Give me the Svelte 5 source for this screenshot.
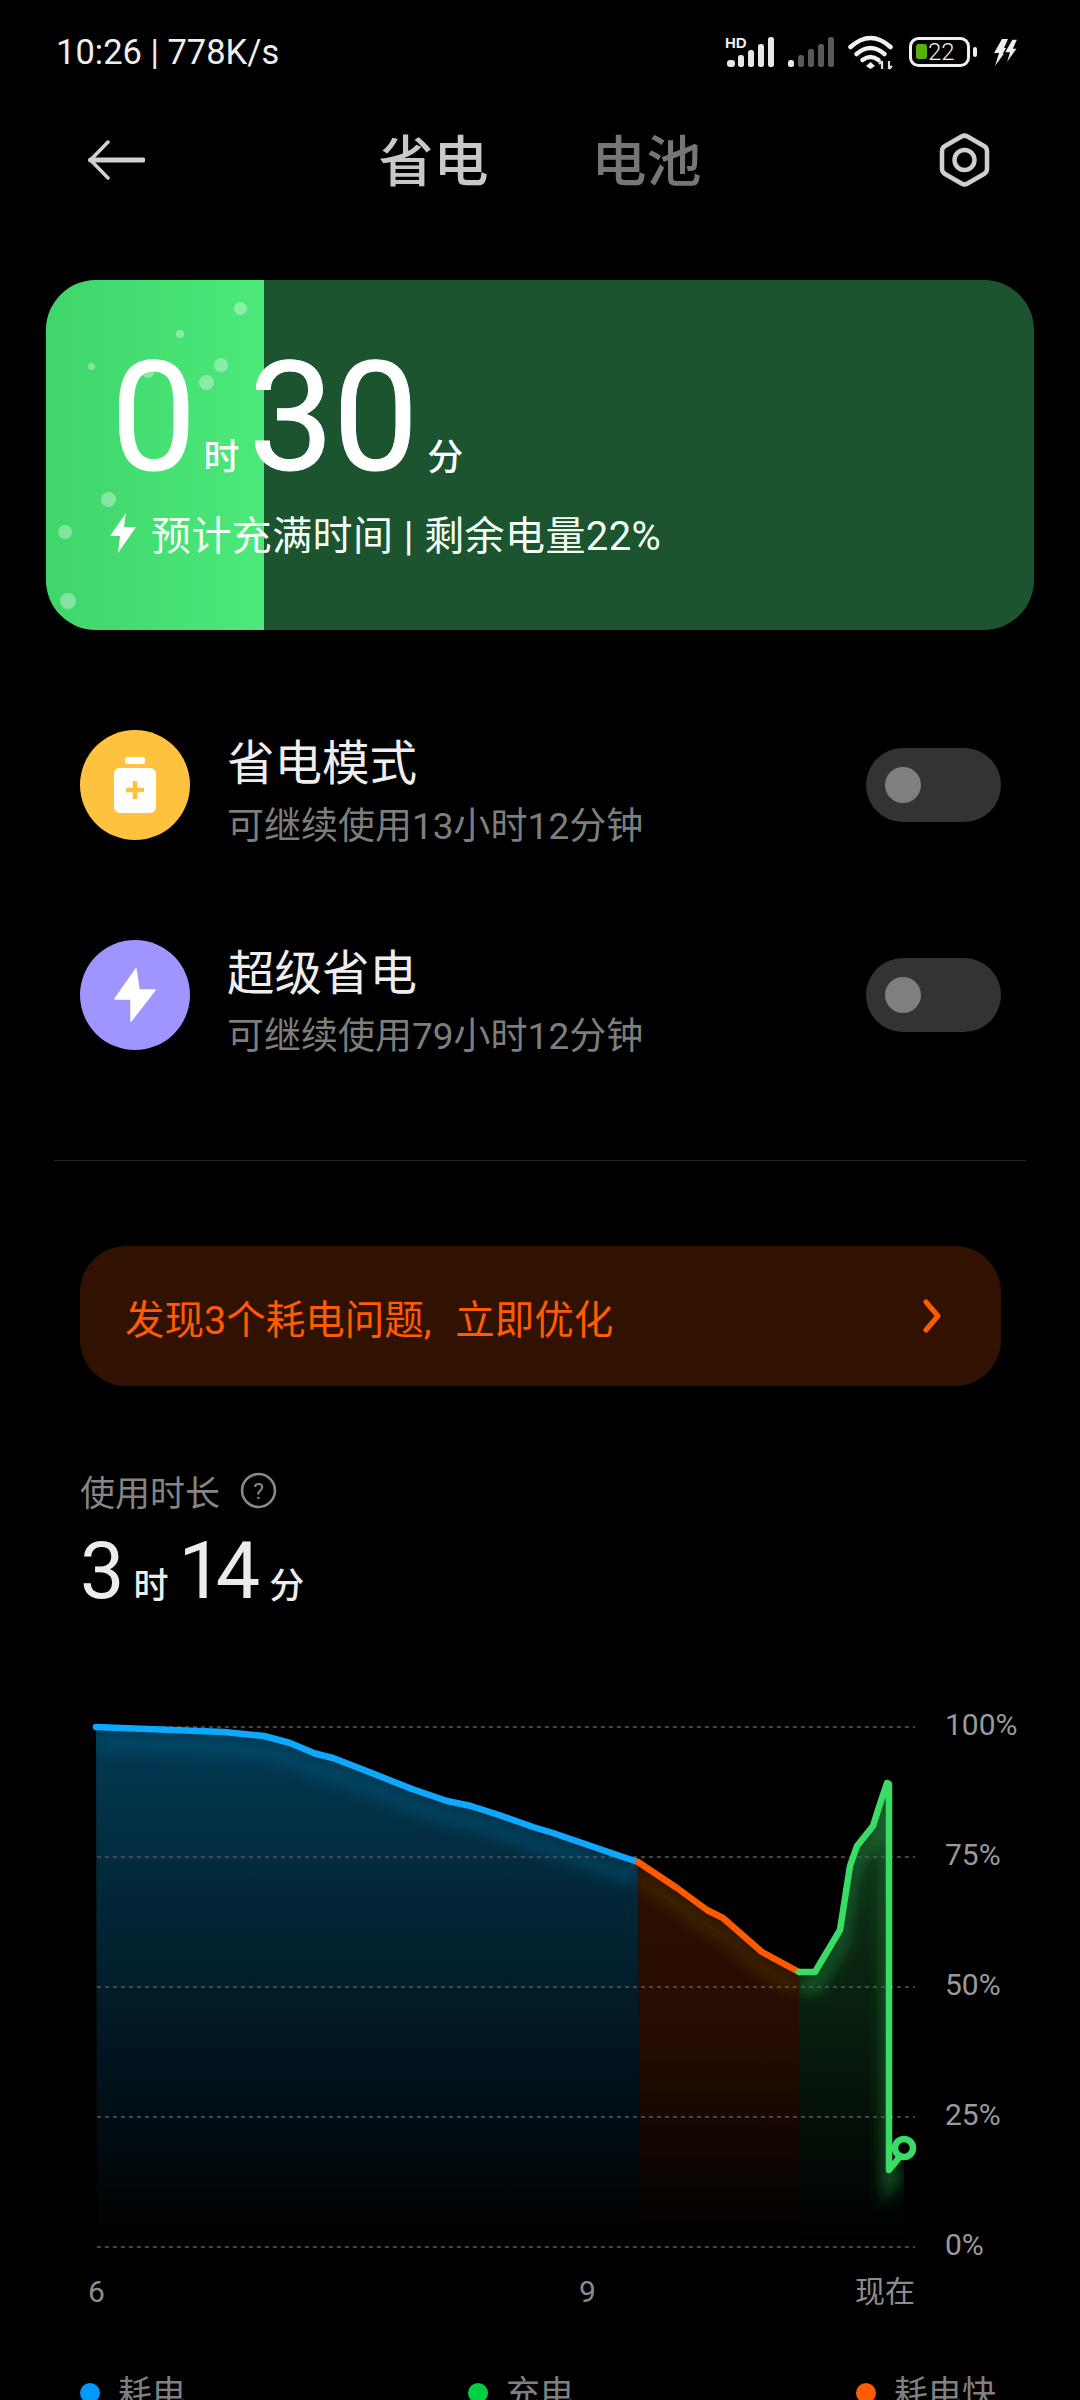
<script>
  // card bubbles, in page coordinates relative to the card
  const bubbles = [
    [194, 28, 6.5], [134, 54, 4], [45, 86, 3.5], [175, 85, 7], [102, 92, 6],
    [160, 102, 7.5], [62, 219, 7.5], [19, 252, 7], [22, 321, 8]
  ];

  const rows = [
    { title: '省电模式', sub: '可继续使用13小时12分钟', color: '#ffc23f', icon: 'battery' },
    { title: '超级省电', sub: '可继续使用79小时12分钟', color: '#9f95ff', icon: 'bolt' }
  ];

  const blue = [[96,1726],[224,1731],[264,1735],[290,1742],[315,1752.5],[333,1757],[364,1769],[412,1788],[447,1800],[471,1805],[499,1814],[533,1826],[553,1832],[620,1855],[638,1861]];
  const orange = [[638,1861],[677,1887],[707,1909],[723,1917],[762,1951],[799,1971]];
  const green = [[799,1971],[815,1971],[840,1929],[850,1865],[857,1845],[873,1825],[879,1806],[887,1782],[889,1783],[889,2169],[898,2158]];

  const pts = (list) => list.map((p) => p.join(',')).join(' ');
  const area = (list, x1, x2) => `${x1},2236 ${pts(list)} ${x2},2236`;

  const grid = [
    { y: 1726, label: '100%' },
    { y: 1856, label: '75%' },
    { y: 1986, label: '50%' },
    { y: 2116, label: '25%' },
    { y: 2246, label: '0%' }
  ];

  const legend = [
    { label: '耗电', color: '#0099ff' },
    { label: '充电', color: '#00d044' },
    { label: '耗电快', color: '#ff5c00' }
  ];
</script>

<div class="page">
  <div class="status">
    <span class="clock">10:26 | 778K/s</span>
    <svg class="status-icons" width="296" height="40" viewBox="725 32 296 40">
      <text x="725" y="48" class="hd">HD</text>
      <g fill="#e8e8e8">
        <rect x="727" y="60" width="8" height="7" rx="3" />
        <rect x="738" y="55" width="6" height="12" rx="2.5" />
        <rect x="748" y="50" width="6" height="17" rx="2.5" />
        <rect x="758" y="44" width="6" height="23" rx="2.5" />
        <rect x="768" y="37" width="6" height="30" rx="2.5" />
        <rect x="788" y="60" width="6" height="7" rx="2.5" />
      </g>
      <g fill="#5a5a5a">
        <rect x="798" y="55" width="6" height="12" rx="2.5" />
        <rect x="808" y="49" width="6" height="18" rx="2.5" />
        <rect x="818" y="44" width="6" height="23" rx="2.5" />
        <rect x="828" y="37" width="6" height="30" rx="2.5" />
      </g>
      <g fill="none" stroke="#f2f2f2" stroke-width="4.5" stroke-linecap="round">
        <path d="M850.5 47 Q870.5 29 890.5 47" />
        <path d="M856.5 54 Q870.5 42 884.5 54" />
        <path d="M862.5 60 Q870.5 54 878.5 60" />
      </g>
      <path d="M870.5 62 L875 66 L870.5 69 L866 66 Z" fill="#f2f2f2" />
      <path d="M882 61 v8 M882 61 l-3 3 M889 69 v-8 M889 69 l3-3" fill="none" stroke="#ddd" stroke-width="2.2" />
      <rect x="910.5" y="38.5" width="58" height="27" rx="8" fill="none" stroke="#f0f0f0" stroke-width="3" />
      <rect x="916" y="44" width="11" height="15" rx="2.5" fill="#55b010" />
      <text x="928" y="60" class="batt">22</text>
      <rect x="973" y="47" width="4" height="10" rx="2" fill="#f0f0f0" />
      <path d="M1002 39 H1008 L1004 48 H1008 L995 66 L999 53 H994 Z" fill="#eee" />
      <path d="M1012 39 H1018 L1014 48 H1018 L1005 66 L1009 53 H1004 Z" fill="#eee" stroke="#000" stroke-width="1.5" />
    </svg>
  </div>

  <div class="nav">
    <svg width="57" height="40" viewBox="0 0 57 40" fill="none" stroke="#d0d0d0" stroke-linecap="round" stroke-linejoin="round">
      <path d="M2.5 20 H55" stroke-width="5" />
      <path d="M20 2 L2.5 20 L20 38" stroke-width="3.5" />
    </svg>
    <div class="tabs">
      <span class="tab active">省电</span>
      <span class="tab">电池</span>
    </div>
    <svg width="51" height="54" viewBox="0 0 51 54" fill="none" stroke="#cfcfcf">
      <path d="M22.5 3.5 a6 6 0 0 1 6 0 L45 13 a6 6 0 0 1 3 5 V36 a6 6 0 0 1 -3 5 L28.5 50.5 a6 6 0 0 1 -6 0 L6 41 a6 6 0 0 1 -3 -5 V18 a6 6 0 0 1 3 -5 Z" stroke-width="4.5" />
      <circle cx="25.5" cy="27" r="10" stroke-width="4.5" />
    </svg>
  </div>

  <div class="card">
    <div class="fill"></div>
    {#each bubbles as [x, y, r]}
      <span class="bubble" style="left:{x - r}px;top:{y - r}px;width:{r * 2}px;height:{r * 2}px"></span>
    {/each}
    <div class="card-body">
      <div class="time">
        <span class="big">0</span><span class="unit first">时</span><span class="big">30</span><span class="unit">分</span>
      </div>
      <div class="eta">
        <svg width="26" height="40" viewBox="0 0 26 40"><path d="M16 0 L0 23 H10 L8 40 L26 14 H14 Z" fill="#fff" /></svg>
        <span>预计充满时间 | 剩余电量22%</span>
      </div>
    </div>
  </div>

  <div class="modes">
    {#each rows as row}
      <div class="mode">
        <div class="mode-icon" style="background:{row.color}">
          {#if row.icon === 'battery'}
            <svg width="44" height="56" viewBox="0 0 44 56">
              <rect x="12" y="0" width="20" height="7" rx="2.5" fill="#fff" />
              <rect x="1" y="11" width="42" height="45" rx="6" fill="#fff" />
              <path d="M22 24 V42 M13 33 H31" stroke={row.color} stroke-width="4.5" />
            </svg>
          {:else}
            <svg width="42" height="54" viewBox="0 0 42 54">
              <path d="M22 1 L1 31 H17 L17 53 L41 22 H25 Z" fill="#fff" stroke="#fff" stroke-width="1.5" stroke-linejoin="round" />
            </svg>
          {/if}
        </div>
        <div class="mode-text">
          <div class="mode-title">{row.title}</div>
          <div class="mode-sub">{row.sub}</div>
        </div>
        <div class="toggle"><span class="knob"></span></div>
      </div>
    {/each}
  </div>

  <div class="divider"></div>

  <div class="banner">
    <span class="banner-text">发现3个耗电问题, 立即优化</span>
    <svg width="20" height="34" viewBox="0 0 20 34" fill="none" stroke="#ff5c00" stroke-width="5" stroke-linecap="round" stroke-linejoin="round">
      <path d="M4 3 L16 17 L4 31" />
    </svg>
  </div>

  <div class="usage">
    <div class="usage-label">
      <span>使用时长</span>
      <svg width="37" height="37" viewBox="0 0 36 36">
        <circle cx="18" cy="18" r="16" fill="none" stroke="#8a8a8a" stroke-width="2.5" />
        <text x="18" y="26" class="qmark">?</text>
      </svg>
    </div>
    <div class="usage-value">
      <span class="num">3</span><span class="num-unit">时</span><span class="num">14</span><span class="num-unit">分</span>
    </div>
  </div>

  <svg class="chart" width="1080" height="640" viewBox="0 1700 1080 640">
    <defs>
      <linearGradient id="fill-blue" gradientUnits="userSpaceOnUse" x1="0" y1="1726" x2="0" y2="2240">
        <stop offset="0" stop-color="#033a54" />
        <stop offset="1" stop-color="#000" />
      </linearGradient>
      <linearGradient id="fill-orange" gradientUnits="userSpaceOnUse" x1="0" y1="1860" x2="0" y2="2240">
        <stop offset="0" stop-color="#2e1000" />
        <stop offset="0.5" stop-color="#240c00" />
        <stop offset="1" stop-color="#000" />
      </linearGradient>
      <linearGradient id="fill-green" gradientUnits="userSpaceOnUse" x1="0" y1="1790" x2="0" y2="2240">
        <stop offset="0" stop-color="#103c1c" />
        <stop offset="1" stop-color="#000" />
      </linearGradient>
      <filter id="soft" x="-10%" y="-10%" width="120%" height="120%">
        <feGaussianBlur stdDeviation="7" />
      </filter>
      <clipPath id="clip-blue"><polygon points={area(blue, 97, 640)} /></clipPath>
      <clipPath id="clip-orange"><polygon points={area(orange, 640, 799)} /></clipPath>
      <clipPath id="clip-green"><polygon points="799,2236 {pts(green.slice(0, 10))} 904,2158 904,2236" /></clipPath>
    </defs>

    <polygon points={area(blue, 97, 640)} fill="url(#fill-blue)" />
    <polygon points={area(orange, 640, 799)} fill="url(#fill-orange)" />
    <polygon points="799,2236 {pts(green.slice(0, 10))} 904,2158 904,2236" fill="url(#fill-green)" />

    <g clip-path="url(#clip-blue)">
      <polyline points={pts(blue)} transform="translate(0 16)" fill="none" stroke="#0a5a80" stroke-opacity="0.5" stroke-width="14" filter="url(#soft)" />
    </g>
    <g clip-path="url(#clip-orange)">
      <polyline points={pts(orange)} transform="translate(0 16)" fill="none" stroke="#4a3008" stroke-opacity="0.6" stroke-width="14" filter="url(#soft)" />
    </g>
    <g clip-path="url(#clip-green)">
      <polyline points={pts(green)} transform="translate(0 14)" fill="none" stroke="#1f7a38" stroke-opacity="0.6" stroke-width="14" filter="url(#soft)" />
    </g>

    {#each grid as line}
      <line x1="97" x2="915" y1={line.y} y2={line.y} stroke="#5a5a5a" stroke-width="1.5" stroke-dasharray="4 4" />
      <text x="945" y={line.y + 8} class="axis">{line.label}</text>
    {/each}

    <polyline points={pts(blue)} fill="none" stroke="#0fa8ff" stroke-width="6.5" stroke-linecap="round" stroke-linejoin="round" />
    <polyline points={pts(orange)} fill="none" stroke="#ff5a00" stroke-width="6.5" stroke-linecap="round" stroke-linejoin="round" />
    <polyline points={pts(green)} fill="none" stroke="#3adc66" stroke-width="6.5" stroke-linecap="round" stroke-linejoin="round" />
    <circle cx="904" cy="2147" r="9" fill="#000" stroke="#3adc66" stroke-width="6.5" />

    <text x="88" y="2301" class="axis tick">6</text>
    <text x="579" y="2301" class="axis tick">9</text>
    <text x="855" y="2301" class="axis tick">现在</text>
  </svg>

  <div class="legend">
    {#each legend as item}
      <div class="legend-item">
        <span class="dot" style="background:{item.color}"></span>
        <span>{item.label}</span>
      </div>
    {/each}
  </div>
</div>

<style>
  :global(body) {
    background: #000;
  }
  .page {
    width: 1080px;
    height: 2400px;
    overflow: hidden;
    background: #000;
    font-family: Roboto, "Noto Sans CJK SC", sans-serif;
    color: #e6e6e6;
  }

  .status {
    height: 104px;
    display: flex;
    align-items: center;
    justify-content: space-between;
    padding: 0 59px 0 56px;
    box-sizing: border-box;
  }
  .clock {
    font-size: 34.5px;
    color: #eee;
  }
  .hd {
    font: 700 15px "Liberation Sans", sans-serif;
    fill: #eee;
  }
  .batt {
    font: 300 24px Roboto, sans-serif;
    fill: #f0f0f0;
  }

  .nav {
    height: 112px;
    display: flex;
    align-items: center;
    justify-content: space-between;
    padding: 0 90px 0 88px;
  }
  .tabs {
    display: flex;
    gap: 103px;
    margin: 5px 4px 0 0;
  }
  .tab {
    font-size: 55px;
    font-weight: 500;
    color: #767676;
    line-height: 1;
  }
  .tab.active {
    color: #c8c8c8;
  }

  .card {
    position: relative;
    margin: 64px 0 0 46px;
    width: 988px;
    height: 350px;
    border-radius: 50px;
    overflow: hidden;
    background: #1b542e;
  }
  .fill {
    position: absolute;
    left: 0;
    top: 0;
    bottom: 0;
    width: 218px;
    background: linear-gradient(90deg, #3fd56b, #4ce97a);
  }
  .bubble {
    position: absolute;
    border-radius: 50%;
    background: rgba(255, 255, 255, 0.35);
  }
  .card-body {
    position: relative;
    padding: 58px 0 0 65px;
    color: #fff;
  }
  .time {
    display: flex;
    align-items: baseline;
    line-height: 160px;
    height: 160px;
  }
  .big {
    font-size: 152px;
    -webkit-text-stroke: 1px #fff;
    letter-spacing: -1px;
  }
  .unit {
    font-size: 36px;
    font-weight: 500;
    margin-left: 10px;
  }
  .unit.first {
    margin: 0 9px 0 8px;
  }
  .eta {
    display: flex;
    align-items: center;
    gap: 15px;
    margin: 6px 0 0 -1px;
    font-size: 40px;
    letter-spacing: 0.4px;
    color: #f4fff6;
  }

  .modes {
    margin-top: 100px;
    display: flex;
    flex-direction: column;
    gap: 100px;
    padding: 0 79px 0 80px;
  }
  .mode {
    display: flex;
    align-items: center;
    height: 110px;
  }
  .mode-icon {
    width: 110px;
    height: 110px;
    border-radius: 50%;
    display: flex;
    align-items: center;
    justify-content: center;
    flex: none;
  }
  .mode-text {
    margin: 13px 0 0 37px;
    flex: 1;
  }
  .mode-title {
    font-size: 47.5px;
    line-height: 60px;
    color: #eee;
  }
  .mode-sub {
    margin-top: 10px;
    font-size: 37px;
    line-height: 46px;
    color: #7e7e7e;
  }
  .toggle {
    width: 135px;
    height: 74px;
    border-radius: 37px;
    background: #333;
    display: flex;
    align-items: center;
    padding-left: 19px;
    box-sizing: border-box;
  }
  .knob {
    width: 36px;
    height: 36px;
    border-radius: 50%;
    background: #7f7f7f;
  }

  .divider {
    margin: 110px 54px 0;
    height: 1px;
    background: #242424;
  }

  .banner {
    margin: 85px 79px 0 80px;
    height: 140px;
    border-radius: 46px;
    background: #311100;
    display: flex;
    align-items: center;
    justify-content: space-between;
    padding: 0 59px 0 45px;
    font-size: 39.5px;
    color: #ff5c00;
  }
  .banner-text {
    word-spacing: 14px;
  }

  .usage {
    margin: 84px 0 0 80px;
  }
  .usage-label {
    display: flex;
    align-items: center;
    gap: 20px;
    height: 40px;
    font-size: 35px;
    color: #858585;
  }
  .qmark {
    font: 400 22px Roboto, sans-serif;
    fill: #8a8a8a;
    text-anchor: middle;
  }
  .usage-value {
    display: flex;
    align-items: baseline;
    margin-top: 20px;
    line-height: 82px;
    color: #ececec;
  }
  .num {
    font-size: 79px;
    letter-spacing: -7px;
  }
  .num-unit {
    font-size: 35px;
    font-weight: 500;
    margin: 0 10px 0 16px;
  }

  .chart {
    display: block;
    margin-top: 73px;
  }
  .axis {
    font: 400 30px Roboto, sans-serif;
    fill: #9a9a9a;
  }
  .tick {
    font-family: Roboto, "Noto Sans CJK SC", sans-serif;
    fill: #8c8c8c;
  }

  .legend {
    display: grid;
    grid-template-columns: 388px 388px 1fr;
    padding-left: 80px;
    margin-top: 30px;
  }
  .legend-item {
    display: flex;
    align-items: center;
    gap: 18px;
    font-size: 34px;
    color: #808080;
    line-height: 44px;
  }
  .dot {
    width: 20px;
    height: 20px;
    border-radius: 50%;
  }
</style>
